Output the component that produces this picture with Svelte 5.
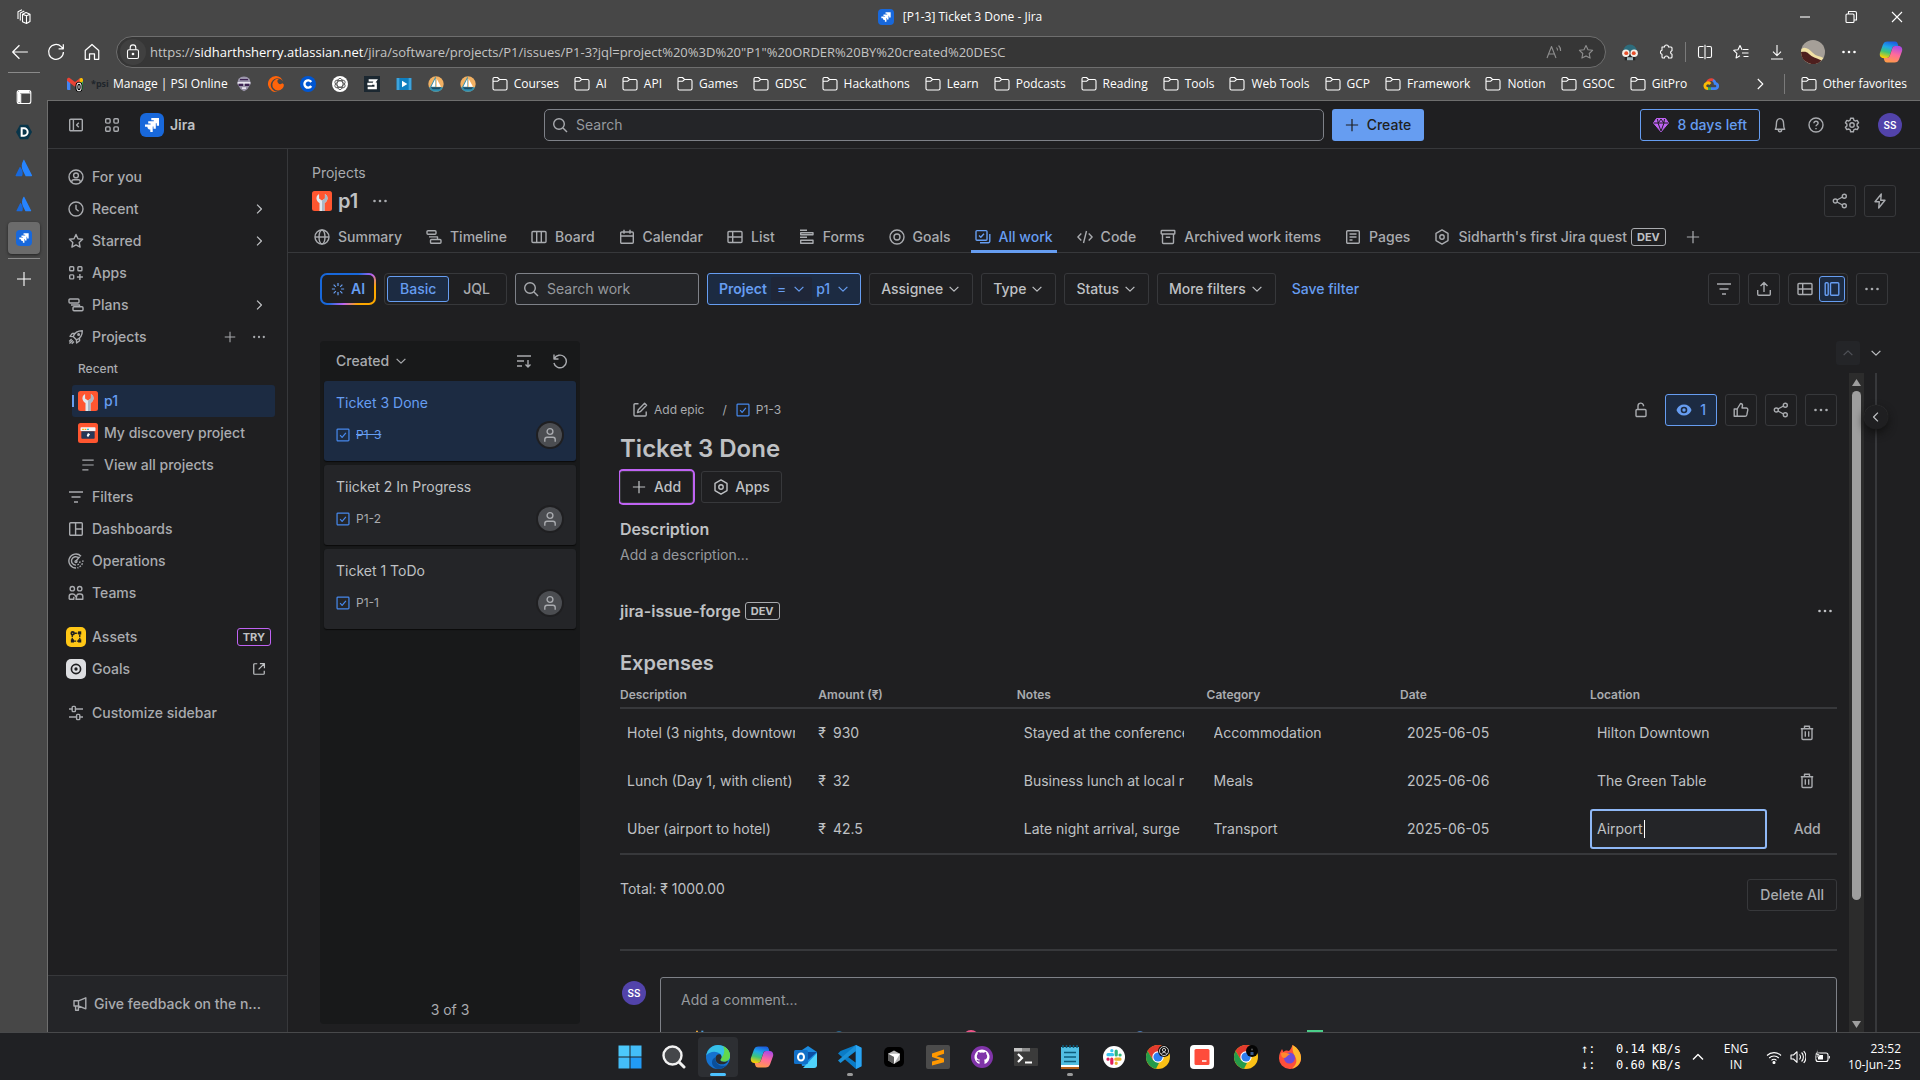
<script>
  import { onMount } from 'svelte';

  const P = {
    sidebar: '<rect x="1.7" y="2.2" width="12.6" height="11.6" rx="1"/><path d="M5.4 2.2v11.6M10.8 5.8 8.6 8l2.2 2.2"/>',
    grid: '<rect x="1.7" y="1.7" width="4.4" height="4.4" rx="1"/><rect x="9.9" y="1.7" width="4.4" height="4.4" rx="1"/><rect x="1.7" y="9.9" width="4.4" height="4.4" rx="1"/><rect x="9.9" y="9.9" width="4.4" height="4.4" rx="1"/>',
    person: '<circle cx="8" cy="8" r="7"/><circle cx="8" cy="6.4" r="2.4"/><path d="M3.8 13.4v-.8c0-1.1.8-1.8 1.8-1.8h4.8c1 0 1.8.7 1.8 1.8v.8"/>',
    clock: '<circle cx="8" cy="8" r="7"/><path d="M8 3.8V8l2.6 2.3"/>',
    star: '<path d="m8 1.5 2 4.2 4.6.6-3.4 3.2.9 4.6L8 11.9l-4.1 2.2.9-4.6L1.4 6.3 6 5.7z"/>',
    apps: '<rect x="1.7" y="1.7" width="4" height="4" rx=".8"/><rect x="9.9" y="1.7" width="4" height="4" rx=".8"/><rect x="1.7" y="9.9" width="4" height="4" rx=".8"/><path d="M11.9 9v6M8.9 12h6"/>',
    plans: '<rect x="1" y="2" width="10" height="4" rx="1"/><rect x="5" y="9.8" width="10" height="4" rx="1"/><path d="M3 8h8.500v1.800"/>',
    rocket: '<path d="M5.2 7.6C6.5 4 9.4 1.7 14.3 1.7c0 4.9-2.3 7.8-5.9 9.1zM5.2 7.6 2 7.4l2.3-3 2.6.1M8.4 10.8l.2 3.2 3-2.3-.1-2.6M3.6 10 1.2 12.4M6 12.4l-2.3 2.4M4.8 11.2l-3.4 3.4"/><circle cx="10.6" cy="5.4" r=".8"/>',
    lines: '<path d="M1.5 2.5h13M1.5 8h13M1.5 13.5h7"/>',
    filter: '<path d="M1 3h14M3.5 8h9M6 13h4"/>',
    dash: '<rect x="1.7" y="1.7" width="12.6" height="12.6" rx="1"/><path d="M7.6 1.7v12.6M7.6 8h6.7"/>',
    ops: '<path d="M13 3.2A7 7 0 1 0 8 15M10.8 5A4.2 4.2 0 1 0 8 12.1M8 8l3.6-4.2"/><path d="M14.8 7.4a7 7 0 0 1-5.4 7.4M12 8.4a4 4 0 0 1-2.6 3.5" stroke-dasharray="1.6 1.3"/><circle cx="8" cy="8.6" r="1"/>',
    teams: '<circle cx="4.3" cy="3.7" r="2.2"/><circle cx="11.7" cy="3.7" r="2.2"/><path d="M1.2 14.2v-2.6c0-1.6 1-2.6 2.4-2.6h1.2c1.3 0 1.9.5 2.4 1.4l.8 1.6M1.2 14.2h4.6v-2.4M14.8 14.2v-2.6c0-1.6-1-2.6-2.4-2.6h-1.2c-1.7 0-2.2 1-2.2 1L8 14.2h6.8z"/>',
    customize: '<path d="M1 4h3.2M7.6 4H15M1 12h7.4M11.8 12H15"/><rect x="4.2" y="1.4" width="3.2" height="5.2" rx=".8"/><rect x="8.6" y="9.4" width="3.2" height="5.2" rx=".8"/>',
    megaphone: '<path d="M13.8 1.8v11L6.5 10H2V4.8h4.5zM6.5 4.8V10M3.6 10v4.2h2.8V10"/>',
    external: '<path d="M6 2H3a1 1 0 0 0-1 1v10a1 1 0 0 0 1 1h10a1 1 0 0 0 1-1v-3M9 1.8h5.2V7M14 2 7.5 8.5"/>',
    right: '<path d="m5.8 3 5 5-5 5"/>',
    left: '<path d="m10.2 3-5 5 5 5"/>',
    down: '<path d="m3 5.500 5 5 5-5"/>',
    up: '<path d="m3 10.500 5-5 5 5"/>',
    plus: '<path d="M8 1v14M1 8h14"/>',
    more: '<g fill="currentColor" stroke="none"><circle cx="2.500" cy="8" r="1.300"/><circle cx="8" cy="8" r="1.300"/><circle cx="13.500" cy="8" r="1.300"/></g>',
    search: '<circle cx="7" cy="7" r="5.300"/><path d="m11 11 4 4"/>',
    gem: '<path fill="#bf63f3" stroke="#bf63f3" stroke-width="1" d="M3.500 1.500h9L15.500 6 8 14.800.5 6z"/><path stroke="#1f1f21" stroke-width="1" d="M.8 6h14.400M5 6l3 8M11 6l-3 8M4.500 2 5.200 6 8 2l2.800 4 .7-4"/>',
    bell: '<path d="M3.300 12.300h9.400c-.9-1.200-1.100-2.400-1.100-5.200C11.600 4 10.500 1.600 8 1.600S4.400 4 4.400 7.100c0 2.800-.2 4-1.100 5.200zM6.200 13c.2 1.100 1 1.700 1.800 1.700s1.600-.6 1.800-1.700"/>',
    help: '<circle cx="8" cy="8" r="7"/><path d="M5.900 6.300C6 5 6.900 4.300 8 4.300s2.100.8 2.100 1.900C10.100 7.700 8 7.700 8 9.300M8 11v1.300"/>',
    gear: '<path d="m6.600 1.200-.4 1.900-1.500.9-1.900-.6-1.400 2.400L2.900 7.100v1.800l-1.500 1.300 1.400 2.400 1.900-.6 1.500.9.4 1.900h2.800l.4-1.900 1.500-.9 1.900.6 1.400-2.400-1.500-1.300V7.100l1.500-1.300-1.400-2.400-1.900.6-1.500-.9-.4-1.900z"/><circle cx="8" cy="8" r="2.200"/>',
    globe: '<circle cx="8" cy="8" r="7"/><ellipse cx="8" cy="8" rx="3" ry="7"/><path d="M1 8h14"/>',
    timeline: '<rect x="1" y="1.700" width="9" height="3.600" rx="1"/><rect x="4.500" y="10.500" width="10.500" height="3.800" rx="1"/><path d="M3 7.900h8.500v2.600"/>',
    board: '<rect x="1" y="2.500" width="14" height="11" rx="1"/><path d="M5.700 2.500v11M10.300 2.500v11"/>',
    calendar: '<rect x="1.700" y="3" width="12.600" height="11.300" rx="1"/><path d="M1.700 7h12.600M5 .8v4M11 .8v4"/>',
    list: '<rect x="1" y="2.500" width="14" height="11" rx="1"/><path d="M1 8h14M5.700 2.500v11"/>',
    forms: '<path d="M1 1.200h7M1 8.300h7"/><rect x="1.700" y="3.800" width="12.300" height="2" /><rect x="1.700" y="11.300" width="12.300" height="3"/>',
    goals: '<circle cx="8" cy="8" r="7"/><circle cx="8" cy="8" r="3"/>',
    allwork: '<rect x="1" y="1.600" width="11" height="9.600" rx="1"/><path d="m4 6.500 1.800 1.700L9 4.700M14.800 5v7.300a1.500 1.500 0 0 1-1.500 1.500H5"/>',
    code: '<path d="M4.300 4.500.9 8l3.400 3.500M11.700 4.500 15.100 8l-3.400 3.500M9.500 2l-3 12"/>',
    archive: '<rect x="1.200" y="1.500" width="13.600" height="3.500" rx=".5"/><path d="M2.500 5v8.500a1 1 0 0 0 1 1h9a1 1 0 0 0 1-1V5M5.800 8.200h4.400"/>',
    page: '<rect x="1.700" y="1.700" width="12.600" height="12.600" rx="1"/><path d="M4.500 5h7M4.500 8h7M4.500 11h3"/>',
    hex: '<path d="m8 .9 6 3.500v7.200l-6 3.500-6-3.500V4.400z"/><circle cx="8" cy="8" r="2.200"/>',
    share: '<circle cx="3.300" cy="8" r="2"/><circle cx="12.300" cy="3.200" r="2"/><circle cx="12.300" cy="12.800" r="2"/><path d="m5 7 5.500-3M5 9l5.500 3"/>',
    bolt: '<path d="M9.300 1 3 8.800h4.300L6.700 15 13 7.200H8.700z"/>',
    upload: '<path d="M8 11V1.800M4.500 5 8 1.500 11.500 5M1.700 9v4.300a1 1 0 0 0 1 1h10.600a1 1 0 0 0 1-1V9"/>',
    split: '<rect x="1.200" y="1.700" width="3" height="12.600" rx="1"/><rect x="6.500" y="1.700" width="8.300" height="12.600" rx="1"/>',
    sort: '<path d="M1 3h14M1 8h7M1 13h5M12 7v7M9.500 11.500 12 14l2.500-2.500"/>',
    undo: '<path d="M2 1.500V6h4.500M2.300 5.800A6.300 6.300 0 1 1 1.900 10"/>',
    check: '<rect x="1.200" y="1.200" width="13.600" height="13.600" rx="1"/><path d="m4.700 8.200 2.300 2.500 4.300-5.200"/>',
    user: '<circle cx="8" cy="4.500" r="2.900"/><path d="M2.800 14.800v-2.300c0-1.300.9-2.300 2.200-2.300h6c1.300 0 2.200 1 2.200 2.300v2.300"/>',
    edit: '<path d="M6.500 1.800H3a1 1 0 0 0-1 1V13a1 1 0 0 0 1 1h10.200a1 1 0 0 0 1-1V9.500"/><path d="m12.600 1.300 2 2-6.300 6.400-2.800.8.800-2.800z"/>',
    lock: '<rect x="3" y="7.500" width="10" height="7" rx="1"/><path d="M5 7.500V4a2.800 2.800 0 0 1 5.500-.8v1"/>',
    eye: '<path fill="currentColor" stroke="none" fill-rule="evenodd" d="M8 2.500c3.500 0 5.600 1.800 7 4.200.5.800.5 1.800 0 2.600-1.400 2.400-3.500 4.200-7 4.200s-5.600-1.800-7-4.200c-.5-.8-.5-1.800 0-2.600 1.400-2.400 3.500-4.200 7-4.200zM8 4.700a3.300 3.300 0 1 0 0 6.600 3.300 3.300 0 0 0 0-6.600z"/><circle cx="8" cy="8" r="1.700" fill="currentColor" stroke="none"/>',
    thumb: '<path d="M1.200 7h3v7.300h-3zM4.200 7 7.500 1.500c1.500 0 2 .8 2 2L9 6h4.300c1 0 1.700.9 1.500 1.900l-1 5c-.2.800-.8 1.400-1.700 1.400H4.200"/>',
    trash: '<path d="M1.800 3.800h12.400M5.500 3.500V1.300h5v2.200M3 3.800v9.700a1 1 0 0 0 1 1h8a1 1 0 0 0 1-1V3.800M6.300 6.300v5.500M9.700 6.300v5.500"/>',
    spark: '<path d="M8 1v3.500M8 11.500V15M1 8h3.500M11.500 8H15M3 3l2.500 2.500M10.500 10.500 13 13M3 13l2.500-2.500M10.500 5.500 13 3"/>',
    workspaces: '<path d="M6.500 5.200 10 3.500l4 1.700v7.300l-3.500 2-4-1.700zM6.500 5.200l4 1.500 3.500-1.500M10.500 6.700v7.800M4.300 11.600V4l4-2M2 10V2.700L6 .8"/>',
    back: '<path d="M15 8H1.500M7.500 2 1.500 8l6 6"/>',
    reload: '<path d="M14.600 8A6.600 6.600 0 1 1 12.600 3.200L14.300 5M14.500 1v4.200h-4.200"/>',
    home: '<path d="M2 6.600 8 1.300l6 5.300v7.900h-3.800V9.600H5.800v4.900H2z"/>',
    padlock: '<rect x="2.500" y="5.800" width="11" height="8.700" rx="1.500"/><path d="M5.200 5.800V3.700a2.800 2.800 0 0 1 5.600 0v2.100"/><circle cx="8" cy="10" r=".8" fill="currentColor"/>',
    aloud: '<path d="M1 14 5.500 2.500 10 14M2.600 10h5.800M10.500 3.500a4 4 0 0 1 1 3M12.600 1.500a7 7 0 0 1 2 5.500"/>',
    puzzle: '<path d="M4 3h2.500a2 2 0 0 1 4 0H13a1 1 0 0 1 1 1v2.700a1.800 1.800 0 0 0 0 3.500V13a1 1 0 0 1-1 1h-2.500a2 2 0 0 0-4 0H5a1 1 0 0 1-1-1v-2.800a2 2 0 0 1 0-3.900z"/>',
    splitscreen: '<path d="M6.500 2.500H3a1.500 1.500 0 0 0-1.500 1.500v8A1.500 1.500 0 0 0 3 13.500h3.500M9.500 2.500H13A1.500 1.500 0 0 1 14.500 4v8a1.500 1.500 0 0 1-1.500 1.500H9.500M8 .8v14.400"/>',
    favlist: '<path d="M9.500 5.500h-.6L7 1.500 5 5.700l-4.300.6 3.200 3.100-.8 4.500L7 11.800M10 5.500h5.500M9 9h6.500M10.500 12.500h5"/>',
    download: '<path d="M8 1v10.500M4 7.700l4 4 4-4M2 15h12"/>',
    min: '<path d="M3 8h10"/>',
    restore: '<rect x="3" y="5" width="8" height="8.500" rx="1"/><path d="M5.500 5V2.500h6.500a1.500 1.500 0 0 1 1.500 1.500v7H11"/>',
    close: '<path d="m3 3 10 10M13 3 3 13"/>',
    folder: '<path d="M1 4.500V2.800c0-.8.500-1.300 1.300-1.300h3.200L7.500 3.500h6c.8 0 1.500.7 1.500 1.500v7.500c0 .8-.7 1.500-1.500 1.500h-11c-.8 0-1.500-.7-1.500-1.500zM1 5.300h4.500l2-1.800"/>',
    tabs: '<rect x="1.200" y="1.500" width="13.600" height="13" rx="2"/><path d="M1.200 4h13.600M4.700 5v9.500" /><path stroke-width="2.400" d="M2.500 2.700h11M3 3v10.500"/>',
    wifi: '<path d="M1 6.500a10 10 0 0 1 14 0M3.200 9a6.800 6.800 0 0 1 9.600 0M5.500 11.300a3.500 3.500 0 0 1 5 0"/><circle cx="8" cy="13.500" r="1" fill="currentColor"/>',
    volume: '<path d="M1 6v4h2.500L7 13.300V2.700L3.500 6zM9.500 5.500a4 4 0 0 1 0 5M11.600 3.500a6.500 6.500 0 0 1 0 9M13.700 2a9 9 0 0 1 0 12"/>',
    battery: '<rect x="2" y="4" width="12" height="8.500" rx="2"/><path d="M15.300 7v2.500"/><path fill="currentColor" stroke="none" d="M4 6h5v4.500H4z"/><path fill="#fff" stroke="#202124" stroke-width=".6" d="M4 .5 1 6h2.300L2.500 10 6 4.800H3.700z"/>'
  };

  const mark = '<path fill="#fff" d="M11.300 5h7.700v7.700h-2.300v-2.500c-1.900 0-3-1.100-3-2.900h-2.400zM8.200 8.200h7.600v7.600h-2.300v-2.400c-1.900 0-3-1.100-3-2.900H8.200zM5 11.400h7.700V19h-2.400v-2.400c-1.900 0-2.900-1.100-2.900-2.900H5z"/>';
  const leaf = 'M8.500 1.500H16c1.500 0 2.200.7 2.700 2.200L19.400 6H16c-1.500 0-2.400.8-2.900 2.400L10.600 16c-.4 1.200-1.200 2-2.600 2H4.500C1.500 18 .2 15.500 1 12.700L3.800 5C4.700 2.500 6 1.500 8.500 1.500z';
  const cop = '<defs><linearGradient id="cl" x1=".6" y1="0" x2=".3" y2="1"><stop offset="0" stop-color="#1b5fe0"/><stop offset=".35" stop-color="#1fa8e8"/><stop offset=".65" stop-color="#3fc477"/><stop offset="1" stop-color="#ffd000"/></linearGradient><linearGradient id="cr" x1=".6" y1="0" x2=".3" y2="1"><stop offset="0" stop-color="#ff9a4a"/><stop offset=".5" stop-color="#ff6a9c"/><stop offset="1" stop-color="#a848e8"/></linearGradient></defs><path fill="url(#cl)" d="' + leaf + '"/><path fill="url(#cr)" transform="rotate(180 12 12)" d="' + leaf + '"/>';
  const chrome = '<circle cx="12" cy="12" r="12" fill="#fbc116"/><path fill="#e33b2e" d="M1.600 6A12 12 0 0 1 22.400 6L12 6.500l-5 8.500z"/><path fill="#259b4a" d="M1.600 6 7 15l6 3-3 5.800A12 12 0 0 1 1.600 6z"/><circle cx="12" cy="12" r="5.700" fill="#fff"/><circle cx="12" cy="12" r="4.600" fill="#2f7df0"/>';
  const boat = '<circle cx="12" cy="12" r="11.500" fill="#f2b163"/><path fill="#2f8fb0" d="M1.500 17h21A11.500 11.500 0 0 1 1.500 17z"/><path fill="#2f8fb0" d="M11.500.5V17H3z"/><path fill="#fff" d="M11 4v12H5zM13 4v12h6.500z"/><path fill="#1b4c66" d="M4 17h16l-3 3H7z"/>';
  const cloud = '<path fill="none" stroke="#ea4335" stroke-width="4.200" d="M6.500 9.500a6.500 6.500 0 0 1 9.500-3"/><path fill="none" stroke="#4285f4" stroke-width="4.200" d="M15 6.200c2 1 3 3 3.200 4.800A4 4 0 0 1 18 19h-6"/><path fill="none" stroke="#34a853" stroke-width="4.200" d="M12 19H6.500"/><path fill="none" stroke="#fbbc04" stroke-width="4.200" d="M7.500 19c-5 0-6.500-6-2-8.300 2-1 4-.5 5.500 1.300"/>';
  const atl = '<path fill="#1868db" d="M7.300 11c-.4-.5-1-.4-1.300.2L.8 21.800c-.3.600.1 1.200.7 1.200h7.300c.3 0 .5-.1.700-.4 1.600-3.200.6-8.300-2.200-11.600z"/><path fill="#2684ff" d="M11.200 1.500c-2.900 4.600-2.700 9.800-.8 13.700l3.600 7.300c.1.300.4.500.7.500H22c.6 0 1-.6.700-1.200L12.500 1.500c-.3-.6-1-.6-1.300 0z"/>';
  const A = {
    jira: '<rect width="24" height="24" rx="6" fill="#1868db"/>' + mark,
    gmail: '<path fill="#4285f4" d="M0 5h5v16H1.500A1.500 1.500 0 0 1 0 19.500z"/><path fill="#34a853" d="M19 7h5v12.500a1.500 1.500 0 0 1-1.500 1.500H19z"/><path fill="#ea4335" d="M0 5c0-2 2.500-3 4-2l8 6 8-6v7l-8 6-12-9z"/><path fill="#fbbc04" d="M19 3.700C21 2 24 3 24 5.500V8l-5 4z"/><rect x="13.500" y="9.500" width="9" height="14" rx="4" fill="#fff" stroke="#000" stroke-width="1.500"/><ellipse cx="18" cy="16.500" rx="1.700" ry="4" fill="none" stroke="#000" stroke-width="1.700"/>',
    face: '<path fill="#9a94aa" d="M4 4a10 8 0 0 1 16 0c1 2 2 5 2 8l-5 8-5 3-5-3-5-8c0-3 1-6 2-8z"/><path fill="#e9e6f0" d="M2.500 9h19v2.500h-19zM9 17h6v2.500H9z"/><path fill="#3c2252" d="M4 11.500h6.500V15H4zM13.500 11.500H20V15h-6.500zM6 4.500h12v1.700H6z"/>',
    crunchy: '<path fill="#ff640a" d="M12 0a12 12 0 1 0 4 23.300A10 10 0 1 1 22.500 8 12 12 0 0 0 12 0z"/><path fill="#ff640a" d="M23.900 13a8.700 8.700 0 1 1-7.500-8.600 4 4 0 1 0 4.800 6.300c1 .3 2 1.300 2.700 2.300z"/>',
    coursera: '<circle cx="12" cy="12" r="12" fill="#0056d2"/><path fill="none" stroke="#fff" stroke-width="3.600" d="M16.800 9a5.500 5.500 0 1 0 0 6"/>',
    openai: '<circle cx="12" cy="12" r="12" fill="#fff"/><g fill="none" stroke="#333" stroke-width="1.100"><ellipse cx="12" cy="12" rx="4.500" ry="8.500"/><ellipse cx="12" cy="12" rx="4.500" ry="8.500" transform="rotate(60 12 12)"/><ellipse cx="12" cy="12" rx="4.500" ry="8.500" transform="rotate(120 12 12)"/></g>',
    three: '<rect width="24" height="24" fill="#1c2831"/><path fill="none" stroke="#fff" stroke-width="3.600" d="M7 6.500h10.500l-3.500 5h3.500V18H5.500M5 12h7"/>',
    play: '<rect x="1" y="3" width="22" height="18" fill="#0f7fc0"/><path fill="#3ea3dc" d="M1 3h4v18H1zM19 3h4v18h-4z"/><path fill="#fff" d="m9 7 8 5-8 5z"/>',
    boat, boat2: boat, cloud,
    goggles: '<path fill="#2d6c7c" d="M3 11a9 9 0 0 1 18 0z"/><path fill="#232323" d="M5 14h14v9H5z"/><path fill="#9db4bb" d="M8 19h8v4H8z"/><circle cx="6.500" cy="13.500" r="5" fill="#f3efe8"/><circle cx="17.500" cy="13.500" r="5" fill="#f3efe8"/><circle cx="7" cy="13.500" r="2.600" fill="#e8502c"/><circle cx="17" cy="13.500" r="2.600" fill="#e8502c"/>',
    photo: '<circle cx="12" cy="12" r="12" fill="#a59f98"/><path fill="#f1e1a5" d="M.5 9C4 6 8 9 12 13s8 3 10.500 5A12 12 0 0 1 .5 9z"/><path fill="#4d1f1e" d="M0 12c3 0 5-1 8 2s7 4 12.500 6.500A12 12 0 0 1 0 12z"/>',
    copilot: cop,
    d: '<path fill="#08354a" d="M6 1h12l6 11-6 11H6L0 12z"/><path fill="none" stroke="#fff" stroke-width="3" d="M8.500 6.500H12a5 5 0 0 1 0 11H8.500z"/>',
    atl, wrench: '<rect width="24" height="24" rx="3" fill="#ff5630"/><path fill="#dfe8ee" d="M8.500 3.500v5.500l3.500 2.500 3.500-2.500V3.500c3 1.500 4 5 2.500 8-.8 1.600-1.500 2.300-3 3V24H9v-9.500c-1.500-.7-2.200-1.400-3-3-1.500-3-.5-6.500 2.500-8z"/><path fill="#a9b8c5" d="M12 11.500l3.500-2.500V3.500c3 1.500 4 5 2.500 8-.8 1.600-1.500 2.300-3 3V24h-3z"/>',
    disc: '<rect width="24" height="24" rx="3" fill="#ff5630"/><rect x="3" y="5" width="18" height="5" rx="1" fill="#f4f5f7"/><path fill="#ffab00" d="M5 7h2v1.500H5zM8 7h2v1.500H8z"/><path fill="#00b8d9" d="M11 7h2v1.500h-2z"/><path fill="#253858" d="M4 10h16v8a1 1 0 0 1-1 1H5a1 1 0 0 1-1-1z"/><path fill="#fff" d="m12 12 2.500 1.500-2.500 3.500-1.500-2z"/>',
    assets: '<rect width="24" height="24" rx="6" fill="#ffc716"/><g fill="#1f1f21" stroke="#1f1f21" stroke-width="1.600"><circle cx="8" cy="7.500" r="1.700" fill="none" stroke-width="2"/><path d="M7.500 9v6.500M10 7.500h5M16.500 9v6M9 17h6" stroke-dasharray="3 1"/><rect x="15.300" y="6" width="2.200" height="2.200"/><rect x="6.600" y="15.600" width="2.200" height="2.200"/><rect x="15.300" y="15.600" width="2.200" height="2.200"/></g>',
    goalapp: '<rect width="24" height="24" rx="6" fill="#dddee1"/><circle cx="12" cy="12" r="5.500" fill="none" stroke="#1f1f21" stroke-width="2"/><circle cx="12" cy="12" r="2" fill="#1f1f21"/>',
    windows: '<path fill="#4cc9fb" d="M.5.500h11v11H.5z"/><path fill="#43bdf8" d="M12.500.500h11v11h-11zM.5 12.500h11v11H.5z"/><path fill="#219bf6" d="M12.500 12.500h11v11h-11z"/>',
    find: '<circle cx="10.500" cy="10.500" r="9" fill="#45474a" stroke="#f1f1f1" stroke-width="2.400"/><path stroke="#f1f1f1" stroke-width="3" stroke-linecap="round" d="m17.500 17.500 4.500 4.500"/>',
    edge: '<circle cx="12" cy="12" r="12" fill="#1572cf"/><path fill="#36c0e8" d="M.3 10.500C1.400 4.500 6 0 12 0s12 4.500 12 10.500c0 4-3 6.300-6 6.300-2.700 0-4-1-3.600-2.200 1.500-1.500 1.500-3.500.3-5C11 5.500 4 6 .3 10.500z"/><path fill="#62d84e" d="M17 1c4.500 2 7 5.500 7 9.500s-3 6.300-6 6.300c-2.700 0-4-1-3.600-2.200C17 11 20 7 17 1z"/><path fill="#0b4f99" d="M9.500 12c-1 6 4 10.500 11 8.300A12 12 0 0 1 12 24c-5-1-7.500-6-5-10z"/><path fill="#2a2c30" d="M14.600 9.500c1.500 2 1 3.700-.1 5-.5 1.300 1 2.300 3.500 2.300 1.600 0 3-.5 4.200-1.400C20 21 9 21 9.600 13c.3-2.500 2-4.300 5-3.500z"/>',
    cop2: cop,
    outlook: '<path fill="#1b8be0" d="M5 7 14 1l9 6v14H8z"/><path fill="#0b4ea3" d="m6 7 17 0-9 8z"/><path fill="#4fd3fb" d="M23 8v12a3 3 0 0 1-3 3H9z"/><rect y="5" width="14" height="14" rx="1.500" fill="#1270c8"/><ellipse cx="7" cy="12" rx="3" ry="3.500" fill="none" stroke="#fff" stroke-width="2"/>',
    vscode: '<path fill="#0a7bc6" d="m18 0 5.500 2.700v18.600L18 24 0 8.500 2.500 6z"/><path fill="#202124" d="M17.500 6.500v11L10 12z"/><path fill="#1a90d8" d="M0 15.500 2.500 18 18 5.500V0z"/><path fill="#2aa5f3" d="m18 0 5.500 2.700v18.600L18 24z"/>',
    cursor: '<rect x="2" y="2" width="20" height="20" rx="5" fill="#000"/><path fill="#b5b5b5" d="m12 5.500 6 3.300v6.500L12 19l-6-3.700V8.800z"/><path fill="#fff" d="M6 8.800h12L12 19v-7z"/><path fill="#606060" d="m6 8.800 6 3.200v7l-6-3.700z"/>',
    sublime: '<rect width="24" height="24" rx="2" fill="#4b4b4b"/><path fill="#ff9800" d="M6 8.500 18 4.500v4.200l-7.500 2.600L18 13.500v3.800L6 20.500v-4l7.500-2L6 12z"/>',
    github: '<circle cx="12" cy="12" r="11" fill="#8034a9"/><path fill="#fff" d="M12 4.500a7.500 7.500 0 0 0-2.500 14.600v-2.500c-2 .4-2.500-1-3-1.500l.5-.4c1 .2 1.200 1 2.600.9l.5-.9c-2-.3-3.300-1.300-3.300-3.500 0-1 .4-1.700 1-2.300-.2-.8 0-1.600.2-2 .9 0 1.600.4 2.200.9a8 8 0 0 1 3.600 0c.6-.5 1.300-.9 2.200-.9.3.7.4 1.300.2 2 .6.600 1 1.300 1 2.300 0 2.200-1.300 3.200-3.200 3.500.4.500.5 1 .5 2v2.400A7.500 7.500 0 0 0 12 4.500z"/>',
    terminal: '<rect y="3" width="24" height="18" rx="1" fill="#3b3b3b"/><path fill="#c4c4c4" d="M0 3h8v3.500H0z"/><path fill="#8e8e8e" d="M8 3h8v3.500H8z"/><path fill="none" stroke="#fff" stroke-width="2.200" d="m4 9 4 4-4 4M11 17.500h7"/>',
    notepad: '<path fill="#52bfe3" d="M3 2h18v20H3z"/><path fill="#fff" d="M3 20h18v2H3z"/><path fill="#b5621b" d="M3 22h18v2H3z"/><path stroke="#0d5d7c" stroke-width="1.500" d="M5 0v3M8.500 0v3M12 0v3M15.500 0v3M19 0v3M6 7.500h12M6 12h12M6 16.500h12"/>',
    slack: '<circle cx="12" cy="12" r="11" fill="#fff"/><g stroke-linecap="round" stroke-width="3.200"><path stroke="#36c5f0" d="M6 9.700h4.500M9.800 5.700h.1"/><path stroke="#2eb67d" d="M14.200 6v4M18 10h.1"/><path stroke="#ecb22e" d="M13.800 14.200H18M14.200 18.200v.1"/><path stroke="#e01e5a" d="M9.800 14v4.200M6 14.200h.1"/></g>',
    chrome1: chrome + '<circle cx="18" cy="6" r="6" fill="#111"/><circle cx="18" cy="6" r="4.500" fill="none" stroke="#ccc"/><circle cx="18" cy="5" r="1.600" fill="none" stroke="#ccc"/><path d="M15.500 9c.5-2 4.500-2 5 0" fill="none" stroke="#ccc"/>',
    red: '<rect width="24" height="24" rx="4" fill="#fff"/><rect x="4.500" y="4" width="15" height="16" rx="1.500" fill="#ff4c3b"/><path stroke="#fff" stroke-width="1.500" d="M12 16h4.500"/>',
    chrome2: chrome + '<circle cx="18" cy="6" r="6" fill="#050505"/><path d="M16.500 7h3v3h-3z" fill="#3b5b8c"/><circle cx="18" cy="4.500" r="1" fill="#555"/>',
    firefox: '<path fill="#ff4f3a" d="M1 13C1 9 2.500 6.500 4 4l1.500 3C8 4.500 10 5.500 11 6c2-2 3-4.500 3.500-6 5 3 9 8 8.500 14a11 10.500 0 0 1-22-1z"/><path fill="#ffb92e" d="M14.500 0C20 3 23.500 8 23 14c-.6 5-5 9-9 9.500 4-3 5-7 4-10-1-3.500-4-5-3.500-13.500z"/><circle cx="11.500" cy="13" r="5.500" fill="#6f4bd8"/><path fill="#ff8a2c" d="M3 8c4-1.500 7 0 9 1.500-3 .5-3 3-5.500 3.500C4 13 3 11 3 8z"/>',
    party: '<path fill="#d8a33a" d="M2 22 8 8l8 8z"/><path stroke="#4b9cd8" stroke-width="3" d="M14 8V1"/><path stroke="#e8a33a" stroke-width="3" d="M6 6V1"/>',
    wave: '<circle cx="12" cy="12" r="10" fill="#2880b8"/>',
    stop: '<circle cx="12" cy="12" r="12" fill="#f0568a"/>',
    lens: '<circle cx="12" cy="12" r="10" fill="#5596e8"/>',
    ok: '<rect width="24" height="24" fill="#4bce8a"/>'
  };

  const favIcons = ['face', 'crunchy', 'coursera', 'openai', 'three', 'play', 'boat', 'boat2'];
  const folders = ['Courses', 'AI', 'API', 'Games', 'GDSC', 'Hackathons', 'Learn', 'Podcasts', 'Reading', 'Tools', 'Web Tools', 'GCP', 'Framework', 'Notion', 'GSOC', 'GitPro'];
  const navTop = [
    ['person', 'For you', false], ['clock', 'Recent', true], ['star', 'Starred', true], ['apps', 'Apps', false], ['plans', 'Plans', true]
  ];
  const navLow = [['filter', 'Filters'], ['dash', 'Dashboards'], ['ops', 'Operations'], ['teams', 'Teams']];
  const tabs = [
    ['globe', 'Summary'], ['timeline', 'Timeline'], ['board', 'Board'], ['calendar', 'Calendar'], ['list', 'List'], ['forms', 'Forms'],
    ['goals', 'Goals'], ['allwork', 'All work'], ['code', 'Code'], ['archive', 'Archived work items'], ['page', 'Pages']
  ];
  const tickets = [['Ticket 3 Done', 'P1-3'], ['Tiicket 2 In Progress', 'P1-2'], ['Ticket 1 ToDo', 'P1-1']];
  const cols = ['Description', 'Amount (₹)', 'Notes', 'Category', 'Date', 'Location'];
  const rows = [
    ['Hotel (3 nights, downtown)', '930', 'Stayed at the conference hotel', 'Accommodation', '2025-06-05', 'Hilton Downtown'],
    ['Lunch (Day 1, with client)', '32', 'Business lunch at local restaurant', 'Meals', '2025-06-06', 'The Green Table'],
    ['Uber (airport to hotel)', '42.5', 'Late night arrival, surge pricing', 'Transport', '2025-06-05', 'Airport']
  ];
  const replies = [['party', 'Looks good!'], ['wave', 'Need help?'], ['stop', 'This is blocked...'], ['lens', 'Can you clarify...?'], ['ok', 'This is on track']];
  const tray = ['windows', 'find', 'edge', 'cop2', 'outlook', 'vscode', 'cursor', 'sublime', 'github', 'terminal', 'notepad', 'slack', 'chrome1', 'red', 'chrome2', 'firefox'];

  let caret = $state(56);
  onMount(() => {
    const ctx = document.createElement('canvas').getContext('2d');
    ctx.font = '14px Inter';
    caret = Math.round(8 + ctx.measureText(rows[2][5]).width);
  });
</script>

{#snippet icon(name, cls = '')}
  <svg class="i {cls}" viewBox="0 0 16 16" aria-hidden="true">{@html P[name]}</svg>
{/snippet}
{#snippet art(name, cls = '')}
  <svg class="a {cls}" viewBox="0 0 24 24" aria-hidden="true">{@html A[name]}</svg>
{/snippet}

<div class="screen">
  <div class="titlebar">
    <button class="bare ws" aria-label="Workspaces">{@render icon('workspaces', 'thin')}</button>
    <div class="wtitle">{@render art('jira', 's16')}<span>[P1-3] Ticket 3 Done - Jira</span></div>
    <div class="winbtns">
      <button class="bare" aria-label="Minimize">{@render icon('min', 'thin')}</button>
      <button class="bare" aria-label="Restore">{@render icon('restore', 'thin')}</button>
      <button class="bare" aria-label="Close">{@render icon('close', 'thin')}</button>
    </div>
  </div>

  <div class="toolbar">
    <div class="navbtns">
      <button class="bare" aria-label="Back">{@render icon('back', 'thin s18')}</button>
      <button class="bare" aria-label="Refresh">{@render icon('reload', 'thin s18')}</button>
      <button class="bare" aria-label="Home">{@render icon('home', 'thin s18')}</button>
    </div>
    <div class="address">
      <button class="bare site" aria-label="Site information">{@render icon('padlock', 'thin')}</button>
      <span class="url">https://<b>sidharthsherry.atlassian.net</b>/jira/software/projects/P1/issues/P1-3?jql=project%20%3D%20"P1"%20ORDER%20BY%20created%20DESC</span>
      <button class="bare dim" aria-label="Read aloud">{@render icon('aloud', 'thin')}</button>
      <button class="bare dim" aria-label="Favorite">{@render icon('star', 'thin')}</button>
    </div>
    <div class="exts">
      <button class="bare" aria-label="Extension">{@render art('goggles', 's18')}</button>
      <button class="bare" aria-label="Extensions">{@render icon('puzzle', 'thin')}</button>
      <span class="bar"></span>
      <button class="bare" aria-label="Split screen">{@render icon('splitscreen', 'thin')}</button>
      <button class="bare" aria-label="Favorites">{@render icon('favlist', 'thin')}</button>
      <button class="bare" aria-label="Downloads">{@render icon('download', 'thin')}</button>
      <button class="bare" aria-label="Profile">{@render art('photo')}</button>
      <button class="bare" aria-label="Settings and more">{@render icon('more', 'thin')}</button>
      <button class="bare" aria-label="Copilot">{@render art('copilot')}</button>
    </div>
  </div>

  <div class="work">
    <nav class="strip" aria-label="Tabs">
      <hr />
      <button class="bare vtab" aria-label="Tab actions">{@render icon('tabs', 'thin')}</button>
      <button class="bare vtab" aria-label="D">{@render art('d', 's16')}</button>
      <button class="bare vtab" aria-label="Atlassian">{@render art('atl', 's18')}</button>
      <button class="bare vtab" aria-label="Atlassian admin">{@render art('atl', 's16')}</button>
      <button class="bare vtab on" aria-label="Jira">{@render art('jira', 's16')}</button>
      <hr />
      <button class="bare vtab new" aria-label="New tab">{@render icon('plus', 'thin')}</button>
    </nav>

    <div class="col">
      <div class="favs">
        <a href="#g" aria-label="Gmail">{@render art('gmail', 's16')}</a>
        <a href="#psi" class="psi"><span>*psi</span>Manage | PSI Online</a>
        {#each favIcons as f}<a href="#{f}" aria-label={f}>{@render art(f, 's16')}</a>{/each}
        <div class="folders">{#each folders as f}<button class="bare fold">{@render icon('folder', 'thin')}{f}</button>{/each}</div>
        <a href="#cloud" aria-label="Cloud">{@render art('cloud', 's16')}</a>
        <span class="grow"></span>
        <button class="bare" aria-label="More favorites">{@render icon('right', 'thin')}</button>
        <span class="bar"></span>
        <button class="bare fold">{@render icon('folder', 'thin')}Other favorites</button>
      </div>

      <div class="jira">
        <header class="top">
          <div class="lead">
            <button class="bare g" aria-label="Collapse sidebar">{@render icon('sidebar')}</button>
            <button class="bare g" aria-label="Switch sites">{@render icon('grid')}</button>
            <a class="brand" href="#home">{@render art('jira')}<span>Jira</span></a>
          </div>
          <div class="mid">
            <label class="sbox">{@render icon('search')}<input type="text" placeholder="Search" aria-label="Search" /></label>
            <button class="create">{@render icon('plus', 's14')}Create</button>
          </div>
          <div class="acts">
            <button class="trial">{@render icon('gem')}8 days left</button>
            <button class="bare" aria-label="Notifications">{@render icon('bell')}</button>
            <button class="bare" aria-label="Help">{@render icon('help')}</button>
            <button class="bare" aria-label="Settings">{@render icon('gear')}</button>
            <button class="bare ss" aria-label="Account">SS</button>
          </div>
        </header>

        <aside class="side">
          <nav class="items">
            {#each navTop as [ic, label, arrow]}
              <a href="#{label}">{@render icon(ic)}<span>{label}</span>{#if arrow}{@render icon('right', 's14 lit')}{/if}</a>
            {/each}
            <a href="#projects">{@render icon('rocket')}<span>Projects</span>{@render icon('plus', 's12')}{@render icon('more', 's14 after')}</a>
            <p>Recent</p>
            <a class="sub sel" href="#p1">{@render art('wrench', 's20')}<span>p1</span></a>
            <a class="sub" href="#disc">{@render art('disc', 's20')}<span>My discovery project</span></a>
            <a class="sub" href="#all"><span class="pad20">{@render icon('lines', 's14')}</span><span>View all projects</span></a>
            {#each navLow as [ic, label]}
              <a href="#{label}">{@render icon(ic)}<span>{label}</span></a>
            {/each}
            <a class="app gap" href="#assets">{@render art('assets', 's20')}<span>Assets</span><em>TRY</em></a>
            <a class="app" href="#goals">{@render art('goalapp', 's20')}<span>Goals</span>{@render icon('external', 's14 lit')}</a>
            <a class="gap" href="#custom">{@render icon('customize')}<span>Customize sidebar</span></a>
          </nav>
          <button class="bare feedback">{@render icon('megaphone')}Give feedback on the n...</button>
        </aside>

        <main>
          <div class="head">
            <a class="crumb" href="#projects">Projects</a>
            <div class="proj">
              {@render art('wrench', 's20')}
              <h1>p1</h1>
              <button class="bare" aria-label="Project actions">{@render icon('more')}</button>
              <span class="grow"></span>
              <button class="btn sq" aria-label="Share">{@render icon('share')}</button>
              <button class="btn sq" aria-label="Automation">{@render icon('bolt')}</button>
            </div>
          </div>
          <nav class="tabs">
            {#each tabs as [ic, label]}
              <a href="#{label}" class:on={label === 'All work'}>{@render icon(ic)}{label}</a>
            {/each}
            <a href="#quest">{@render icon('hex')}Sidharth's first Jira quest<em class="dev">DEV</em></a>
            <button class="bare" aria-label="Add view">{@render icon('plus', 's14')}</button>
          </nav>

          <div class="filters">
            <button class="ai">{@render icon('spark', 's14')}AI</button>
            <div class="seg"><button class="on">Basic</button><button>JQL</button></div>
            <label class="sbox work-q">{@render icon('search')}<input type="text" placeholder="Search work" aria-label="Search work" /></label>
            <div class="pfil"><button>Project</button><button class="eq">={@render icon('down', 's14')}</button><button>p1{@render icon('down', 's14')}</button></div>
            {#each ['Assignee', 'Type', 'Status', 'More filters'] as f}
              <button class="btn dd">{f}{@render icon('down', 's14')}</button>
            {/each}
            <button class="bare save">Save filter</button>
            <span class="grow"></span>
            <button class="btn sq" aria-label="Group">{@render icon('filter')}</button>
            <button class="btn sq" aria-label="Export">{@render icon('upload')}</button>
            <div class="seg vw"><button aria-label="List view">{@render icon('list')}</button><button class="on" aria-label="Detail view">{@render icon('split')}</button></div>
            <button class="btn sq" aria-label="More">{@render icon('more')}</button>
          </div>

          <div class="panes">
            <section class="queue">
              <div class="qh">
                <button class="bare">Created{@render icon('down', 's14')}</button>
                <span class="grow"></span>
                <button class="bare" aria-label="Sort">{@render icon('sort')}</button>
                <button class="bare" aria-label="Refresh list">{@render icon('undo')}</button>
              </div>
              {#each tickets as [title, key], n}
                <a href="#{key}" class="card" class:sel={n === 0}>
                  <span>{title}</span>
                  <span class="key">{@render icon('check', 's14 blue')}<span class:done={n === 0}>{key}</span><i>{@render icon('user')}</i></span>
                </a>
              {/each}
              <span class="grow"></span>
              <p class="count">3 of 3</p>
            </section>

            <section class="detail">
              <div class="pager">
                <button class="bare off" aria-label="Previous">{@render icon('up', 's14')}</button>
                <button class="bare" aria-label="Next">{@render icon('down', 's14')}</button>
              </div>
              <div class="view">
                <article>
                  <div class="path">
                    <button class="bare epic">{@render icon('edit')}Add epic</button>
                    <span>/</span>
                    <a href="#P1-3">{@render icon('check', 's14 blue')}P1-3</a>
                    <span class="grow"></span>
                    <button class="bare lock" aria-label="Restrictions">{@render icon('lock')}</button>
                    <button class="btn watch">{@render icon('eye')}1</button>
                    <button class="btn sq" aria-label="Like">{@render icon('thumb')}</button>
                    <button class="btn sq" aria-label="Share item">{@render icon('share')}</button>
                    <button class="btn sq" aria-label="Item actions">{@render icon('more')}</button>
                  </div>
                  <h2>Ticket 3 Done</h2>
                  <div class="adds">
                    <button class="btn ring">{@render icon('plus', 's14')}Add</button>
                    <button class="btn">{@render icon('hex')}Apps</button>
                  </div>
                  <h3>Description</h3>
                  <p class="ph">Add a description...</p>
                  <div class="forge"><h3>jira-issue-forge</h3><em class="dev">DEV</em><span class="grow"></span><button class="bare" aria-label="Panel actions">{@render icon('more')}</button></div>
                  <h4>Expenses</h4>
                  <table>
                    <thead><tr>{#each cols as c}<th>{c}</th>{/each}<th aria-label="Actions"></th></tr></thead>
                    <tbody>
                      {#each rows as r, n}
                        <tr>
                          {#each r as v, c}
                            <td><div class="cell">
                              {#if c === 1}<span>₹</span>{/if}
                              <input type="text" value={v} aria-label={cols[c]} class:focus={n === 2 && c === 5} />
                              {#if n === 2 && c === 5}<i class="caret" style:left="{caret}px"></i>{/if}
                            </div></td>
                          {/each}
                          <td class="last">{#if n < 2}<button class="bare" aria-label="Delete">{@render icon('trash')}</button>{:else}<button class="bare">Add</button>{/if}</td>
                        </tr>
                      {/each}
                    </tbody>
                  </table>
                  <div class="total"><span>Total: ₹ 1000.00</span><button class="btn del">Delete All</button></div>
                  <hr />
                  <div class="comment">
                    <span class="ss">SS</span>
                    <div class="cbox">
                      <input type="text" placeholder="Add a comment..." aria-label="Add a comment" />
                      <div class="replies">{#each replies as [ic, t]}<button class="bare">{@render art(ic, 's16')}{t}</button>{/each}</div>
                    </div>
                  </div>
                </article>
                <div class="scroll"><svg viewBox="0 0 10 8" aria-hidden="true"><path d="M5 0 10 8H0z" /></svg><div class="track"><div class="thumb"></div></div><svg viewBox="0 0 10 8" aria-hidden="true"><path d="M5 8 10 0H0z" /></svg></div>
                <div class="rail"><button class="bare" aria-label="Expand details">{@render icon('left', 's14')}</button></div>
              </div>
            </section>
          </div>
        </main>
      </div>
    </div>
  </div>

  <footer>
    <div></div>
    <div class="dock">
      {#each tray as t}
        <button class="bare {t}" aria-label={t}>{@render art(t)}</button>
      {/each}
    </div>
    <div class="status">
      <div class="net"><span>↑:</span><span>0.14 KB/s</span><span>↓:</span><span>0.60 KB/s</span></div>
      <button class="bare chev" aria-label="Hidden icons">{@render icon('up')}</button>
      <div class="lang">ENG<br />IN</div>
      <div class="sys">{@render icon('wifi', 'thin')}{@render icon('volume', 'thin')}{@render icon('battery', 'thin')}</div>
      <div class="time">23:52<br />10-Jun-25</div>
    </div>
  </footer>
</div>

<style>
  :global(body) { background: #474747; }
  .screen, .screen * { box-sizing: border-box; }
  .screen {
    height: 100vh; display: flex; flex-direction: column; overflow: hidden; background: #474747;
    font: 14px/20px Inter, "Noto Sans", sans-serif; color: #a9abaf;
  }
  button, input { font: inherit; color: inherit; margin: 0; padding: 0; }
  button { display: flex; align-items: center; justify-content: center; white-space: nowrap; }
  input { background: none; border: 0; outline: 0; min-width: 0; }
  input::placeholder { color: #96999e; opacity: 1; }
  a { color: inherit; text-decoration: none; }
  p, h1, h2, h3, h4 { margin: 0; }
  h1, h2, h3, h4 { color: #bfc1c4; font-weight: 600; }
  hr { border: 0; margin: 0; }
  .bare { background: none; border: 0; }
  .grow { flex: 1; }
  .i, .a { display: block; flex: none; }
  .i { width: 16px; height: 16px; fill: none; stroke: currentColor; stroke-width: 1.4; stroke-linejoin: round; }
  .a { width: 24px; height: 24px; }
  .thin { stroke-width: 1.1; }
  .s12 { width: 12px; height: 12px; }
  .s14 { width: 14px; height: 14px; }
  .s16 { width: 16px; height: 16px; }
  .s18 { width: 18px; height: 18px; }
  .s20 { width: 20px; height: 20px; }
  .blue { color: #4688ec; }

  .titlebar, .toolbar, .favs { color: #fff; font: 12px/16px "Open Sans", "Noto Sans", sans-serif; }
  .titlebar { height: 34px; display: grid; grid-template-columns: 1fr auto 1fr; align-items: center; flex: none; }
  .ws { width: 48px; height: 32px; }
  .wtitle { display: flex; align-items: center; gap: 9px; }
  .winbtns { display: flex; justify-content: flex-end; }
  .winbtns button { width: 46px; height: 32px; }
  .toolbar { display: flex; align-items: center; height: 36px; flex: none; padding-right: 5px; }
  .navbtns { display: flex; width: 116px; padding-left: 2px; }
  .navbtns button { width: 36px; height: 32px; }
  .address { flex: 1; display: flex; align-items: center; height: 32px; border: 1px solid #6e6e6e; border-radius: 16px; background: #363636; padding: 0 3px; color: #fff; }
  .site { width: 26px; height: 26px; border-radius: 13px; background: #404040; }
  .url { flex: 1; padding-left: 4px; color: #c4c4c4; font-size: 13px; line-height: 20px; white-space: nowrap; overflow: hidden; }
  .url b { color: #fff; font-weight: 400; }
  .dim { color: #8e8e8e; width: 32px; height: 28px; }
  .exts { display: flex; align-items: center; padding-left: 6px; }
  .exts button { width: 36px; height: 32px; }
  .exts .bar { margin: 0 1px; }
  .exts button:last-child { width: 48px; }
  .bar { width: 1px; height: 20px; background: #7a7a7a; }

  .work { flex: 1; min-height: 0; display: flex; }
  .strip { width: 47px; flex: none; display: flex; flex-direction: column; padding: 2px 7px 0 8px; }
  .strip hr { height: 1px; background: #8a8a8a; }
  .strip hr:first-child { margin-bottom: 7px; }
  .vtab { height: 36px; color: #fff; flex: none; }
  .vtab:nth-child(2) { height: 34px; }
  .vtab.on { height: 32px; background: #6b6b6b; border-radius: 4px; box-shadow: 0 1px 3px #222; margin-bottom: 4px; }
  .vtab.new { height: 40px; }
  .col { flex: 1; min-width: 0; display: flex; flex-direction: column; }
  .favs { height: 30px; display: flex; align-items: center; padding: 0 13px 2px 20px; gap: 16px; flex: none; }
  .favs a, .fold { display: flex; align-items: center; }
  .favs > a { flex: none; }
  .folders { display: flex; gap: 15px; }
  .fold { gap: 6px; }
  .favs .psi { margin: 0 -8px; }
  .psi span { width: 22px; color: #20252b; font-size: 9px; font-weight: 700; }
  .jira {
    flex: 1; min-height: 0; border: solid #6e6e6e; border-width: 1px 0 0 1px; background: #1f1f21;
    display: grid; grid-template: 48px 1fr / 240px 1fr;
  }
  .top { grid-column: 1 / 3; display: grid; grid-template-columns: 1fr auto 1fr; align-items: center; border-bottom: 1px solid #37383b; }
  .lead { display: flex; align-items: center; padding-left: 10px; }
  .g { width: 36px; height: 32px; }
  .brand { display: flex; align-items: center; gap: 6px; padding-left: 10px; font-weight: 600; color: #bfc1c4; }
  .mid { display: flex; gap: 8px; width: 880px; }
  .sbox { display: flex; align-items: center; gap: 8px; flex: 1; height: 32px; border: 1px solid #7e8188; border-radius: 5px; background: #242528; padding: 0 7px; }
  .sbox input { flex: 1; }
  .create { width: 92px; border: 0; border-radius: 3px; background: #669df1; color: #1f1f21; gap: 8px; font-weight: 500; }
  .acts { display: flex; justify-content: flex-end; align-items: center; gap: 20px; padding-right: 18px; }
  .acts .ss { margin-left: -2px; }
  .trial { height: 32px; padding: 0 12px; gap: 8px; background: none; border: 1px solid #669df1; border-radius: 3px; color: #669df1; font-weight: 500; margin-right: -8px; }
  .ss { width: 24px; height: 24px; border-radius: 50%; background: #5243aa; color: #fff; font-size: 10px; font-weight: 600; line-height: 24px; text-align: center; flex: none; }

  .side { border-right: 1px solid #37383b; display: flex; flex-direction: column; min-height: 0; }
  .items { flex: 1; padding: 12px 12px 0; font-weight: 500; }
  .items a { display: flex; align-items: center; gap: 8px; height: 32px; padding: 0 9px 0 8px; border-radius: 3px; }
  .items a > span:nth-child(2) { flex: 1; }
  .items p { font-size: 12px; line-height: 32px; padding-left: 18px; }
  .items a.sub { margin-left: 12px; padding-left: 6px; gap: 6px; position: relative; }
  .items a.app { padding-left: 6px; gap: 6px; }
  .items a.gap { margin-top: 12px; }
  .items a.sel { background: #1c2b42; color: #669df1; }
  .sel.sub::before { content: ''; position: absolute; left: 0; top: 10px; width: 2px; height: 12px; background: #669df1; }
  .pad20 { width: 20px; padding-left: 3px; }
  .after { margin-left: 8px; }
  .lit { color: #bfc1c4; }
  em { font: 700 11px/16px Inter, sans-serif; border: 1px solid #bf63f3; border-radius: 3px; padding: 0 5px; color: #bfc1c4; }
  .items em { margin-right: -5px; }
  .feedback { height: 57px; border-top: 1px solid #37383b; background: #242528; gap: 6px; font-weight: 500; justify-content: flex-start; padding-left: 24px; }

  main { min-width: 0; min-height: 0; display: flex; flex-direction: column; }
  .head { padding: 13px 24px 4px; }
  .crumb { display: block; line-height: 22px; padding-bottom: 1px; }
  .proj { display: flex; align-items: center; gap: 8px; height: 32px; }
  .proj h1 { font-size: 20px; line-height: 24px; padding-right: 6px; margin-left: -2px; }
  .btn { height: 32px; border: 1px solid #37383b; border-radius: 3px; background: none; font-weight: 500; color: #bfc1c4; gap: 6px; padding: 0 11px; }
  .sq { width: 32px; padding: 0; color: #a9abaf; flex: none; }
  .tabs { display: flex; height: 32px; border-bottom: 1px solid #37383b; padding: 0 24px 0 22px; gap: 16px; font-weight: 500; flex: none; }
  .tabs a { display: flex; align-items: center; gap: 8px; padding: 0 4px; white-space: nowrap; height: 32px; border-bottom: 3px solid transparent; border-top: 3px solid transparent; }
  .tabs a.on { color: #669df1; border-bottom-color: #669df1; }
  .dev { border-color: #a9abaf; margin-left: -4px; }
  .filters { display: flex; gap: 8px; padding: 20px 32px 36px; flex: none; }
  .ai { width: 56px; height: 32px; border: 2px solid transparent; border-radius: 7px; gap: 6px; color: #669df1; font-weight: 600; background: linear-gradient(#1f1f21, #1f1f21) padding-box, linear-gradient(135deg, #1868db 45%, #bf63f3 62%, #fca700 78%) border-box; }
  .seg { display: flex; border: 1px solid #37383b; border-radius: 4px; padding: 2px; height: 32px; font-weight: 500; }
  .seg button { background: none; border: 1px solid transparent; border-radius: 3px; padding: 0 12px; }
  .seg button:last-child { padding: 0 13px; }
  .seg .on { background: #1c2b42; border-color: #669df1; color: #669df1; }
  .vw button, .vw button:last-child { padding: 0; width: 28px; }
  .vw .on, .vw button.on { width: 26px; }
  .work-q { flex: none; width: 184px; border-radius: 3px; }
  .pfil { display: flex; align-items: center; height: 32px; border: 1px solid #669df1; border-radius: 3px; background: #1c2b42; color: #669df1; font-weight: 600; padding: 0 6px 0 3px; }
  .pfil button { background: none; border: 0; height: 24px; gap: 6px; padding: 0 4px 0 8px; border-radius: 3px; }
  .pfil .eq { background: #1f2638; padding: 0 6px; font-weight: 400; }
  .pfil button:last-child { padding: 0 4px; font-weight: 500; }
  .dd { gap: 4px; }
  .save { color: #669df1; font-weight: 500; padding: 0 8px; }

  .panes { flex: 1; min-height: 0; display: flex; padding-left: 32px; }
  .queue { width: 260px; flex: none; margin-bottom: 8px; background: #18191a; border-radius: 4px; padding: 0 4px 4px; display: flex; flex-direction: column; gap: 4px; }
  .qh { height: 36px; padding: 4px 8px 0 12px; display: flex; align-items: center; gap: 20px; }
  .qh button { gap: 5px; font-weight: 500; }
  .card { height: 80px; border-radius: 3px; background: #242528; color: #bfc1c4; padding: 12px; display: flex; flex-direction: column; gap: 10px; box-shadow: 0 1px 1px #0a0a0a; flex: none; }
  .card.sel { background: #1c2b42; color: #669df1; }
  .key { display: flex; align-items: center; gap: 6px; height: 24px; font-size: 12px; color: #a9abaf; }
  .sel .key { color: #669df1; }
  .key .done { text-decoration: line-through; }
  .key i { margin: 0 2px 0 auto; width: 24px; height: 24px; border-radius: 50%; background: #4b4d51; color: #a9abaf; display: grid; place-items: center; box-shadow: 0 0 0 2px #1f1f21; }
  .count { text-align: center; }

  .detail { flex: 1; min-width: 0; display: flex; flex-direction: column; padding-left: 40px; }
  .pager { display: flex; justify-content: flex-end; gap: 4px; padding: 0 32px 8px 0; }
  .pager button { width: 24px; height: 24px; border-radius: 3px; color: #bfc1c4; }
  .pager .off { background: #242528; color: #505258; }
  .view { flex: 1; min-height: 0; display: flex; }
  article { flex: 1; min-width: 0; overflow: hidden; padding: 21px 12px 0 1px; margin-left: -1px; color: #bfc1c4; }
  .path { display: flex; align-items: center; gap: 8px; height: 32px; font-size: 12px; line-height: 16px; color: #a9abaf; }
  .path a, .epic { display: flex; align-items: center; gap: 6px; }
  .path a { padding-left: 1px; }
  .epic { padding: 0 10px 0 12px; }
  .lock { margin-right: 8px; }
  .watch { border-color: #669df1; background: #1c2b42; color: #669df1; font-size: 14px; gap: 8px; padding: 0 10px; }
  h2 { font-size: 24px; line-height: 28px; padding-top: 9px; }
  .adds { display: flex; gap: 8px; padding: 8px 0 16px; }
  .ring { outline: 2px solid #bf63f3; gap: 8px; }
  h3 { font-size: 16px; line-height: 20px; }
  .ph { color: #96999e; padding-top: 6px; }
  .forge { display: flex; align-items: center; gap: 8px; height: 24px; margin-top: 34px; padding-right: 4px; }
  h4 { font-size: 20px; line-height: 24px; margin: 28px 0 12px; }
  table { width: 100%; border-collapse: separate; border-spacing: 0; table-layout: fixed; border-bottom: 2px solid #37383b; }
  th { text-align: left; font-size: 12px; line-height: 16px; font-weight: 600; padding: 0 0 4px; color: #a9abaf; border-bottom: 2px solid #37383b; width: 15.9%; }
  th:nth-child(-n + 2) { width: 16.3%; }
  th:nth-child(3) { width: 15.6%; }
  th:nth-child(5) { width: 15.6%; }
  th:last-child { width: 4.4%; }
  td { height: 48px; padding: 0 16px 0 0; }
  .cell { display: flex; align-items: center; position: relative; }
  .cell input { width: 100%; height: 40px; padding: 0 0 1px; border: solid transparent; border-width: 2px 7px; }
  .cell .focus { background: #242528; border: 2px solid #8fb8f6; border-radius: 3px; padding: 0 5px 1px; }
  .caret { position: absolute; left: 56px; top: 11px; width: 1px; height: 18px; background: #fff; }
  td.last { padding: 0 6px 0 0; }
  .last button { margin: 0 auto; font-weight: 500; color: #a9abaf; }
  .total { display: flex; justify-content: space-between; padding: 24px 0 38px; }
  .del { padding: 0 12px; color: #a9abaf; }
  article > hr { height: 2px; background: #37383b; margin-bottom: 26px; }
  .comment { display: flex; gap: 14px; padding-left: 2px; }
  .comment .ss { margin-top: 4px; }
  .cbox { flex: 1; height: 160px; border: 1px solid #7e8188; border-radius: 3px; background: #242528; padding: 12px 20px; }
  .cbox input { width: 100%; height: 20px; display: block; }
  .replies { display: flex; gap: 32px; padding: 18px 12px 0; }
  .replies button { gap: 8px; font-weight: 500; }
  .scroll { width: 15px; background: #2c2c2c; display: flex; flex-direction: column; align-items: center; padding: 5px 0 3px; }
  .scroll svg { width: 9px; height: 9px; fill: #9e9e9e; flex: none; }
  .track { flex: 1; padding-top: 4px; }
  .thumb { width: 9px; height: 81%; border-radius: 5px; background: #9e9e9e; }
  .rail { width: 56px; display: flex; justify-content: flex-start; background: linear-gradient(#37383b, #37383b) 11px 0 / 2px 100% no-repeat; }
  .rail button { width: 24px; height: 24px; border-radius: 50%; background: #1f1f21; margin-top: 32px; color: #bfc1c4; box-shadow: 0 4px 8px #111, 0 0 1px #555; }

  footer { height: 48px; flex: none; background: #202124; border-top: 1px solid #48494b; display: grid; grid-template-columns: 1fr auto 1fr; align-items: center; color: #fff; font: 12px/16px "Open Sans", "Noto Sans", sans-serif; }
  .dock { display: flex; gap: 4px; }
  .dock button { width: 40px; height: 40px; border-radius: 4px; position: relative; }
  .dock .edge { background: #2d2f33; }
  .dock .edge::after, .dock .vscode::after, .dock .notepad::after { content: ''; position: absolute; bottom: 1px; left: 17px; width: 6px; height: 3px; border-radius: 2px; background: #9a9a9a; }
  .dock .edge::after { left: 12px; width: 16px; background: #4cc2ff; }
  .status { display: flex; align-items: center; justify-content: flex-end; padding-right: 19px; }
  .net { display: grid; grid-template-columns: 35px auto; font: 12px/16px "DejaVu Sans Mono", monospace; }
  .chev { width: 34px; height: 40px; }
  .lang { width: 42px; text-align: center; }
  .sys { display: flex; gap: 8px; padding: 0 0 0 9px; }
  .time { width: 71px; text-align: right; }
</style>
